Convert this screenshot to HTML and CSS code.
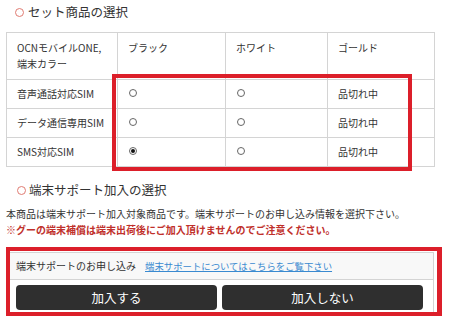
FILE: index.html
```html
<!DOCTYPE html>
<html lang="ja">
<head>
<meta charset="utf-8">
<link rel="stylesheet" href="styles.css">
</head>
<body>
<div class="page">
  <h2 class="sec-title"><span class="ring"></span>セット商品の選択</h2>
  <table class="sku">
    <colgroup><col class="c1"><col class="c2"><col class="c3"><col class="c4"></colgroup>
    <thead>
      <tr><th>OCNモバイルONE,<br>端末カラー</th><th>ブラック</th><th>ホワイト</th><th>ゴールド</th></tr>
    </thead>
    <tbody>
      <tr><td>音声通話対応SIM</td><td><span class="radio"></span></td><td><span class="radio"></span></td><td>品切れ中</td></tr>
      <tr><td>データ通信専用SIM</td><td><span class="radio"></span></td><td><span class="radio"></span></td><td>品切れ中</td></tr>
      <tr><td>SMS対応SIM</td><td><span class="radio checked"></span></td><td><span class="radio"></span></td><td>品切れ中</td></tr>
    </tbody>
  </table>
  <h2 class="sec-title second"><span class="ring"></span>端末サポート加入の選択</h2>
  <p class="note">本商品は端末サポート加入対象商品です。端末サポートのお申し込み情報を選択下さい。<br><strong class="warn">※グーの端末補償は端末出荷後にご加入頂けませんのでご注意ください。</strong></p>
  <div class="support">
    <div class="support-head"><span>端末サポートのお申し込み</span><a href="#" class="link">端末サポートについてはこちらをご覧下さい</a></div>
    <div class="support-btns"><button class="btn">加入する</button><button class="btn">加入しない</button></div>
  </div>
  <div class="mark mark-table"></div>
  <div class="mark mark-support"></div>
</div>
</body>
</html>
```
FILE: styles.css
```css
* { box-sizing: border-box; }
html, body { margin: 0; padding: 0; background: #fff; }
body {
  font-family: "Noto Sans CJK JP", "Noto Sans", sans-serif;
  color: #333;
  font-size: 10px;
}
.page { position: relative; width: 450px; height: 326px; padding: 2px 16px 0 6px; overflow: hidden; }
.sec-title {
  display: flex; align-items: center; gap: 4px;
  margin: 0; padding-left: 9px;
  font-size: 12.5px; font-weight: normal; line-height: 20px; color: #333;
}
.sec-title.second { margin-top: 13px; padding-left: 11px; gap: 3px; }
.ring {
  flex: none;
  width: 9px; height: 9px; border-radius: 50%;
  border: 1.6px solid #e07b72; display: inline-block;
}
.sku {
  margin-top: 10px; width: 428px; border-collapse: collapse; table-layout: fixed;
}
.c1 { width: 111px; } .c2 { width: 108px; } .c3 { width: 102px; } .c4 { width: 107px; }
.sku th, .sku td {
  border: 1px solid #d4d4d4; text-align: left; font-weight: normal;
  line-height: 16px; padding: 6px 10px; vertical-align: middle;
}
.sku th { padding: 7px 10px; vertical-align: top; }
.radio {
  display: inline-block; width: 8px; height: 8px; border-radius: 50%;
  border: 1px solid #666; position: relative; top: -2px; left: 1px; vertical-align: middle;
}
.radio.checked::after {
  content: ""; position: absolute; left: 1px; top: 1px; width: 4px; height: 4px;
  border-radius: 50%; background: #111;
}
.note { margin: 6px 0 0; line-height: 16px; font-size: 10px; }
.warn { color: #c0302b; font-weight: bold; }
.support { margin-top: 14px; width: 428px; border: 1px solid #d4d4d4; }
.support-head {
  background: #f8f8f8; padding: 5px 9px; line-height: 16px; border-bottom: 1px solid #d4d4d4;
  display: flex; gap: 9px; align-items: center;
}
.link { color: #3a8ad0; font-size: 9.4px; text-decoration: underline; }
.support-btns { display: flex; gap: 5px; padding: 5px 10px 4px 9px; }
.btn {
  flex: 1; height: 25px; border: none; border-radius: 4px; background: #2f2f2f; color: #fff;
  font-family: inherit; font-size: 12.5px; padding: 0;
}
.mark { position: absolute; border: 4px solid #dc1f2a; pointer-events: none; }
.mark-table { left: 112px; top: 74px; width: 300px; height: 97px; }
.mark-support { left: 6px; top: 247px; width: 436px; height: 69px; border-width: 4px 5px 4px 4px; }
```
